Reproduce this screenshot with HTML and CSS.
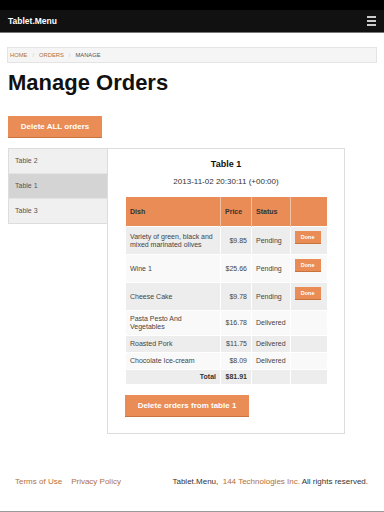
FILE: index.html
```html
<!DOCTYPE html>
<html lang="en">
<head>
  <meta charset="UTF-8">
  <title>Manage Orders - Tablet.Menu</title>
  <link rel="stylesheet" href="styles.css">
</head>
<body>

<div class="topbar">
  <div class="navbar">
    <span class="brand">Tablet.Menu</span>
    <span class="burger"><i></i><i></i><i></i></span>
  </div>
</div>

<div class="page">
  <ul class="crumbs">
    <li><a href="#">Home</a></li>
    <li class="sep">/</li>
    <li><a href="#">Orders</a></li>
    <li class="sep">/</li>
    <li class="current">Manage</li>
  </ul>

  <h1>Manage Orders</h1>

  <button class="btn btn-big">Delete ALL orders</button>

  <div class="orders">
    <!-- Tables list -->
    <ul class="table-list">
      <li>Table 2</li>
      <li class="active">Table 1</li>
      <li>Table 3</li>
    </ul>

    <div class="order-panel">
      <h3>Table 1</h3>
      <p class="stamp">2013-11-02 20:30:11 (+00:00)</p>

      <table class="order-table">
        <thead>
          <tr>
            <th class="col-dish">Dish</th>
            <th class="col-price">Price</th>
            <th class="col-status">Status</th>
            <th class="col-action"></th>
          </tr>
        </thead>
        <tbody>
          <tr>
            <td>Variety of green, black and mixed marinated olives</td>
            <td class="num">$9.85</td>
            <td>Pending</td>
            <td class="action"><button class="btn btn-done">Done</button></td>
          </tr>
          <tr>
            <td>Wine 1</td>
            <td class="num">$25.66</td>
            <td>Pending</td>
            <td class="action"><button class="btn btn-done">Done</button></td>
          </tr>
          <tr>
            <td>Cheese Cake</td>
            <td class="num">$9.78</td>
            <td>Pending</td>
            <td class="action"><button class="btn btn-done">Done</button></td>
          </tr>
          <tr>
            <td>Pasta Pesto And Vegetables</td>
            <td class="num">$16.78</td>
            <td>Delivered</td>
            <td></td>
          </tr>
          <tr>
            <td>Roasted Pork</td>
            <td class="num">$11.75</td>
            <td>Delivered</td>
            <td></td>
          </tr>
          <tr>
            <td>Chocolate Ice-cream</td>
            <td class="num">$8.09</td>
            <td>Delivered</td>
            <td></td>
          </tr>
          <tr class="total">
            <td class="num">Total</td>
            <td class="num">$81.91</td>
            <td></td>
            <td></td>
          </tr>
        </tbody>
      </table>

      <button class="btn btn-table">Delete orders from table 1</button>
    </div>
  </div>
</div>

<div class="footer">
  <div class="footer-links">
    <a href="#">Terms of Use</a>
    <a href="#">Privacy Policy</a>
  </div>
  <div class="copy">Tablet.Menu,&nbsp; <a href="#">144 Technologies Inc.</a> All rights reserved.</div>
</div>

</body>
</html>
```

FILE: styles.css
```css
body {
  margin: 0;
  font-family: "Liberation Sans", Arial, sans-serif;
  color: #333;
  background-color: #fff;
}
a {
  color: #b0703e;
  text-decoration: none;
}
.topbar {
  background-color: #000;
  padding-top: 10px;
}
.navbar {
  height: 22px;
  background-color: #111;
  border-bottom: 1px solid #777;
  display: flex;
  align-items: center;
  justify-content: space-between;
  padding: 0 8px;
}
.brand {
  color: #fff;
  font-weight: bold;
  font-size: 8.5px;
}
.burger {
  display: flex;
  flex-direction: column;
  gap: 2px;
}
.burger i {
  display: block;
  width: 9px;
  height: 2px;
  background-color: #ccc;
}
.page {
  padding: 0 8px;
}
.crumbs {
  list-style: none;
  margin: 14px -1px 0;
  padding: 0 2px;
  height: 14px;
  background-color: #f5f5f5;
  border: 1px solid #e4e4e4;
  display: flex;
  align-items: center;
  gap: 5px;
  font-size: 5.8px;
  text-transform: uppercase;
}
.crumbs .sep {
  color: #ccc;
}
.crumbs .current {
  color: #555;
}
h1 {
  margin: 7px 0 0;
  font-size: 22px;
  line-height: 26px;
  color: #111;
}
.btn {
  font-family: "Liberation Sans", Arial, sans-serif;
  background-color: #e98c55;
  color: #fff;
  font-weight: bold;
  border: none;
  border-bottom: 1px solid #c9733f;
  cursor: pointer;
}
.btn-big {
  margin-top: 20px;
  width: 94px;
  height: 22px;
  font-size: 8px;
}
.orders {
  display: flex;
  align-items: flex-start;
  margin-top: 10px;
}
.table-list {
  list-style: none;
  margin: 0;
  padding: 0;
  width: 98px;
  border: 1px solid #ddd;
  border-right: none;
  background-color: #f0f0f0;
}
.table-list li {
  height: 24px;
  line-height: 24px;
  padding-left: 6px;
  font-size: 7px;
  color: #555;
  border-bottom: 1px solid #e4e4e4;
}
.table-list li:last-child {
  border-bottom: none;
}
.table-list li.active {
  background-color: #d4d4d4;
}
.order-panel {
  width: 200px;
  height: 284px;
  padding: 0 18px;
  border: 1px solid #ddd;
  text-align: center;
}
.order-panel h3 {
  margin: 10px 0 0;
  font-size: 9px;
  line-height: 10px;
  color: #111;
}
.stamp {
  margin: 8px 0 0;
  font-size: 8px;
  line-height: 10px;
  color: #333;
}
.order-table {
  margin-top: 10px;
  width: 201px;
  border-collapse: collapse;
  text-align: left;
  font-size: 7px;
  line-height: 8px;
  color: #444;
}
.order-table th {
  background-color: #e98c55;
  color: #333;
  height: 29px;
  padding: 0 4px;
  border-left: 1px solid #f3c2a2;
  font-weight: bold;
}
.order-table th:first-child {
  border-left: none;
}
.order-table td {
  padding: 4px 4px;
  border-left: 1px solid #fff;
  border-top: 1px solid #fff;
}
.order-table td:first-child {
  border-left: none;
}
.order-table tbody tr:nth-child(odd) td {
  background-color: #ededed;
}
.order-table tbody tr:nth-child(even) td {
  background-color: #f9f9f9;
}
.col-dish { width: 86px; }
.col-price { width: 22px; }
.col-status { width: 29px; }
.order-table .num {
  text-align: right;
}
.order-table td.action {
  padding: 4px 4px 10px;
  vertical-align: top;
}
.order-table .total td {
  padding: 3px 4px;
  font-weight: bold;
  color: #333;
}
.btn-done {
  display: block;
  width: 26px;
  height: 13px;
  padding: 0;
  font-size: 5.5px;
}
.btn-table {
  display: block;
  margin: 11px 0 0 -1px;
  width: 124px;
  height: 22px;
  font-size: 8px;
}
.footer {
  margin-top: 43px;
  padding: 0 16px 25px 15px;
  display: flex;
  justify-content: space-between;
  font-size: 8px;
  color: #333;
  border-bottom: 2px solid #999;
}
.footer-links {
  display: flex;
  gap: 9px;
}
```
